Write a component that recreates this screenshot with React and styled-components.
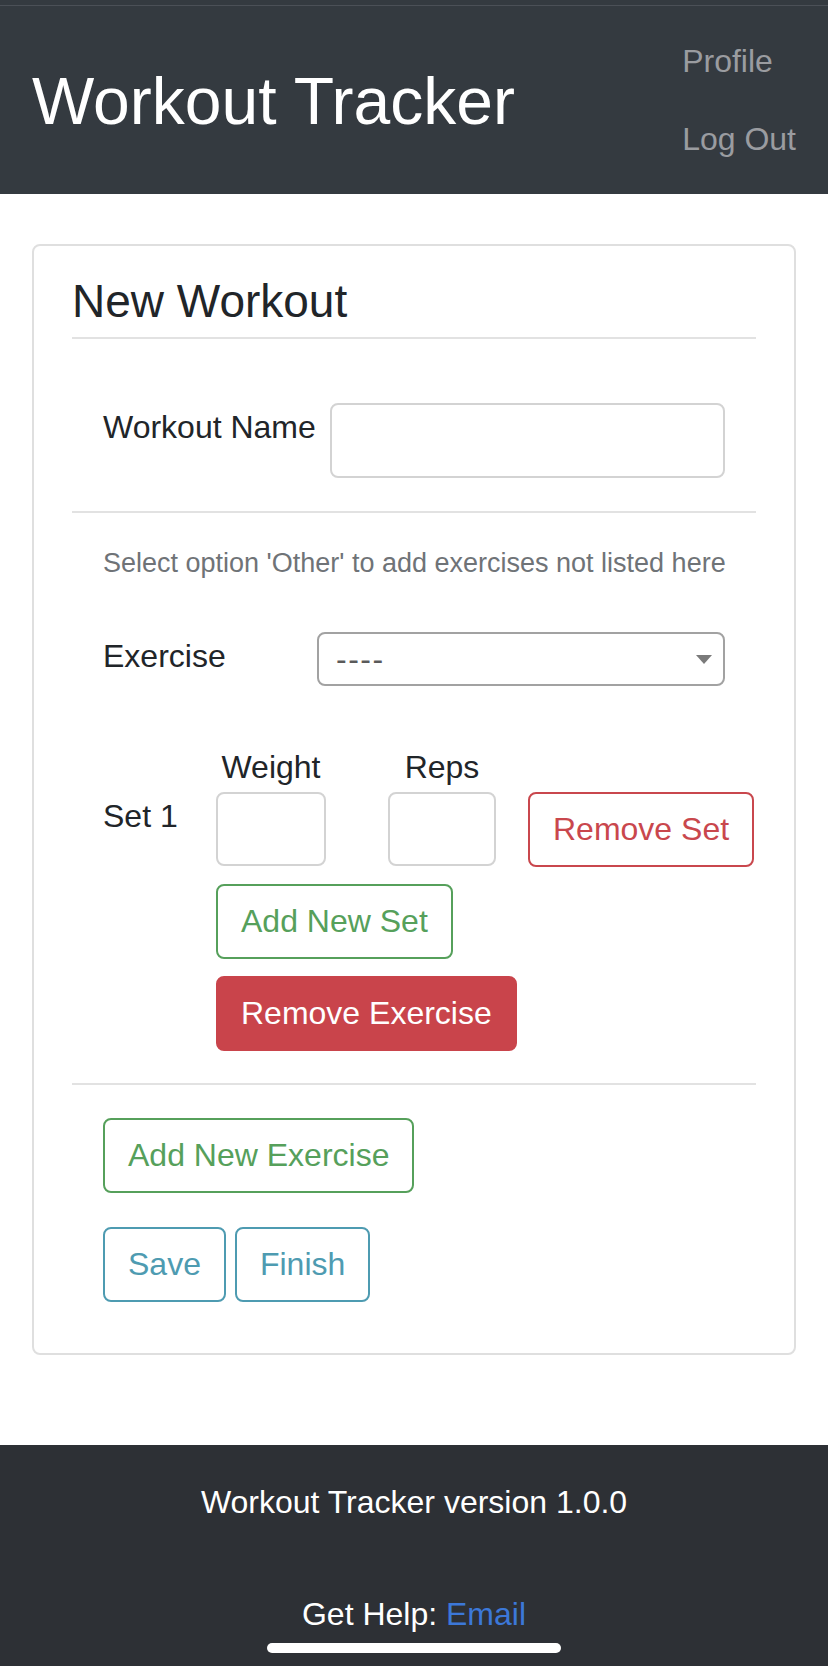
import React, { useState } from 'react';
import styled, { createGlobalStyle } from 'styled-components';

const GlobalStyle = createGlobalStyle`
  * {
    box-sizing: border-box;
  }

  html, body {
    margin: 0;
    padding: 0;
  }

  body {
    font-family: "Liberation Sans", Arial, sans-serif;
    color: #212529;
    background: #fff;
  }
`;

const Page = styled.div`
  min-height: 100vh;
  display: flex;
  flex-direction: column;
`;

const Header = styled.header`
  height: 194px;
  padding: 6px 32px 0;
  display: flex;
  align-items: center;
  justify-content: space-between;
  background: linear-gradient(
    to bottom,
    #343a40 0,
    #343a40 5px,
    #4b5057 5px,
    #4b5057 6px,
    #343a40 6px
  );
`;

const Brand = styled.a`
  font-size: 66px;
  line-height: 1.2;
  margin-top: 4px;
  color: #fff;
  text-decoration: none;
  white-space: nowrap;
`;

const Nav = styled.nav`
  display: flex;
  flex-direction: column;
`;

const NavLink = styled.a`
  padding: 15px 0;
  font-size: 32px;
  line-height: 48px;
  color: #9a9ca0;
  text-decoration: none;
`;

const Main = styled.main`
  padding: 50px 32px 90px;
`;

const Card = styled.section`
  border: 2px solid #dfdfdf;
  border-radius: 8px;
  padding: 28px 38px 51px;
`;

const CardTitle = styled.h4`
  margin: 0;
  font-size: 46px;
  font-weight: 400;
  line-height: 55px;
`;

const Divider = styled.hr`
  border: none;
  height: 2px;
  background: #e2e2e2;
  margin: ${(p) => p.$top}px 0 0;
`;

const FormRow = styled.div`
  display: flex;
  align-items: flex-start;
  padding: 0 31px;
  margin-top: ${(p) => p.$top}px;
`;

const Label = styled.label`
  flex-shrink: 0;
  font-size: 32px;
  line-height: 48px;
  width: ${(p) => (p.$width ? `${p.$width}px` : 'auto')};
  margin-right: ${(p) => p.$gap || 0}px;
  margin-top: ${(p) => p.$top || 0}px;
`;

const TextInput = styled.input`
  flex: 1;
  min-width: 0;
  width: 100%;
  height: 75px;
  border: 2px solid #d3d3d3;
  border-radius: 8px;
  padding: 0 20px;
  font-size: 32px;
  font-family: inherit;
  background: #fff;
`;

const SmallInput = styled(TextInput)`
  flex: none;
  height: 74px;
  padding: 0 12px;
`;

const HelpText = styled.p`
  margin: 30px 0 0;
  padding: 0 31px;
  font-size: 27px;
  line-height: 40px;
  color: #6f7377;
  white-space: nowrap;
`;

const SelectWrap = styled.div`
  position: relative;
  flex: 1;
`;

const Select = styled.select`
  width: 100%;
  height: 54px;
  appearance: none;
  -webkit-appearance: none;
  border: 2px solid #a2a2a2;
  border-radius: 8px;
  background: #fff;
  padding: 0 17px;
  font-family: inherit;
  font-size: 32px;
  letter-spacing: 1.5px;
  color: #5a5a5a;
`;

const Caret = styled.svg`
  position: absolute;
  right: 13px;
  top: 23px;
  pointer-events: none;
`;

const SetRow = styled.div`
  display: flex;
  align-items: flex-start;
  padding: 0 31px;
  margin-top: 57px;
`;

const Field = styled.div`
  display: flex;
  flex-direction: column;
  align-items: center;
  width: ${(p) => p.$width}px;
  margin-right: ${(p) => p.$gap || 0}px;
  flex-shrink: 0;
`;

const FieldLabel = styled.span`
  font-size: 32px;
  line-height: 48px;
  margin-bottom: 1px;
`;

const variants = {
  'outline-danger': { color: '#c9474d', bg: 'transparent', border: '#c9474d' },
  'outline-success': { color: '#56a05b', bg: 'transparent', border: '#56a05b' },
  'outline-info': { color: '#4e9bb1', bg: 'transparent', border: '#4e9bb1' },
  danger: { color: '#fff', bg: '#c9444b', border: '#c9444b' },
};

const Button = styled.button`
  flex-shrink: 0;
  font-family: inherit;
  font-size: 32px;
  line-height: 49px;
  padding: 11px 23px;
  border-radius: 8px;
  border: 2px solid ${(p) => variants[p.$variant].border};
  background: ${(p) => variants[p.$variant].bg};
  color: ${(p) => variants[p.$variant].color};
  cursor: pointer;
  margin-top: ${(p) => p.$top || 0}px;
  margin-left: ${(p) => p.$left || 0}px;
`;

const ButtonStack = styled.div`
  display: flex;
  flex-direction: column;
  align-items: flex-start;
  gap: ${(p) => p.$gap}px;
  padding-left: ${(p) => p.$indent}px;
  margin-top: ${(p) => p.$top}px;
`;

const ButtonGroup = styled.div`
  display: flex;
  gap: 9px;
`;

const Footer = styled.footer`
  position: relative;
  flex: 1;
  min-height: 223px;
  padding-top: 33px;
  background: #2d3035;
  color: #fff;
  text-align: center;
  font-size: 32px;
  line-height: 48px;
`;

const FooterLine = styled.p`
  margin: ${(p) => p.$top || 0}px 0 0;
`;

const EmailLink = styled.a`
  color: #3c78d8;
  text-decoration: none;
`;

const HomeBar = styled.div`
  position: absolute;
  left: 50%;
  bottom: 15px;
  width: 294px;
  height: 10px;
  border-radius: 5px;
  background: #fff;
  transform: translateX(-50%);
`;

const App = () => {
  const [name, setName] = useState('');
  const [exercise, setExercise] = useState('');
  const [weight, setWeight] = useState('');
  const [reps, setReps] = useState('');

  return (
    <Page>
      <GlobalStyle />
      <Header>
        <Brand href="#">Workout Tracker</Brand>
        <Nav>
          <NavLink href="#">Profile</NavLink>
          <NavLink href="#">Log Out</NavLink>
        </Nav>
      </Header>

      <Main>
        <Card>
          <CardTitle>New Workout</CardTitle>
          <Divider $top={8} />

          <FormRow $top={64}>
            <Label $gap={14}>Workout Name</Label>
            <TextInput value={name} onChange={(e) => setName(e.target.value)} />
          </FormRow>

          <Divider $top={33} />
          <HelpText>Select option 'Other' to add exercises not listed here</HelpText>

          <FormRow $top={49}>
            <Label $width={214}>Exercise</Label>
            <SelectWrap>
              <Select value={exercise} onChange={(e) => setExercise(e.target.value)}>
                <option value="">----</option>
                <option value="other">Other</option>
              </Select>
              <Caret width="16" height="9" viewBox="0 0 16 9">
                <path d="M0 0 H16 L8 9 Z" fill="#7a7a7a" />
              </Caret>
            </SelectWrap>
          </FormRow>

          <SetRow>
            <Label $width={113} $top={49}>Set 1</Label>
            <Field $width={110} $gap={62}>
              <FieldLabel>Weight</FieldLabel>
              <SmallInput value={weight} onChange={(e) => setWeight(e.target.value)} />
            </Field>
            <Field $width={108}>
              <FieldLabel>Reps</FieldLabel>
              <SmallInput value={reps} onChange={(e) => setReps(e.target.value)} />
            </Field>
            <Button $variant="outline-danger" $top={49} $left={32}>Remove Set</Button>
          </SetRow>

          <ButtonStack $indent={144} $top={17} $gap={17}>
            <Button $variant="outline-success">Add New Set</Button>
            <Button $variant="danger">Remove Exercise</Button>
          </ButtonStack>

          <Divider $top={32} />

          <ButtonStack $indent={31} $top={33} $gap={34}>
            <Button $variant="outline-success">Add New Exercise</Button>
            <ButtonGroup>
              <Button $variant="outline-info">Save</Button>
              <Button $variant="outline-info">Finish</Button>
            </ButtonGroup>
          </ButtonStack>
        </Card>
      </Main>

      <Footer>
        <FooterLine>Workout Tracker version 1.0.0</FooterLine>
        <FooterLine $top={64}>
          Get Help: <EmailLink href="#">Email</EmailLink>
        </FooterLine>
        <HomeBar />
      </Footer>
    </Page>
  );
};

export default App;
